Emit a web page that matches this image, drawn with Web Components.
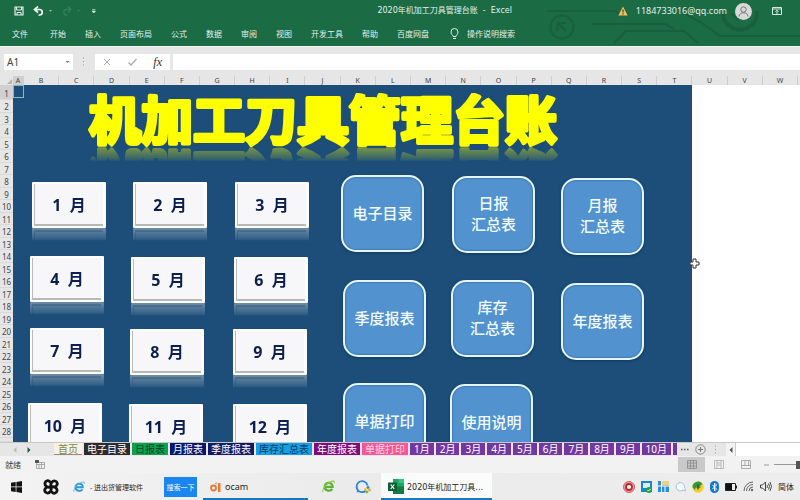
<!DOCTYPE html>
<html lang="zh-CN">
<head>
<meta charset="utf-8">
<title>2020年机加工刀具管理台账 - Excel</title>
<style>
    body {
        margin: 0;
        font-family: 'Noto Sans', 'Noto Sans CJK SC', sans-serif;
        font-size: 8px;
        color: #444;
    }
</style>
</head>
<body>
<excel-window></excel-window>

<script>
const base = `
    * { box-sizing: border-box; }
    button, input {
        font: inherit;
        color: inherit;
        background: none;
        border: none;
        padding: 0;
        margin: 0;
        min-width: 0;
    }
    button { cursor: pointer; white-space: nowrap; }
    svg { display: block; flex: none; }
`;

function define(name, html, setup) {
    const template = document.createElement('template');
    template.innerHTML = html;
    customElements.define(name, class extends HTMLElement {
        constructor() {
            super();
            this.attachShadow({ mode: 'open' });
            this.shadowRoot.appendChild(template.content.cloneNode(true));
        }
        connectedCallback() {
            if (setup) setup(this, this.shadowRoot);
        }
    });
}

// shapes are placed on the sheet by their x / y attributes
function place(host) {
    host.style.left = host.getAttribute('x') + 'px';
    host.style.top = host.getAttribute('y') + 'px';
}

define('month-card', `
    <style>
        ${base}
        :host { position: absolute; width: 74px; height: 46px; }
        button {
            display: block;
            width: 100%;
            height: 100%;
            padding: 2px 3px 2px 2px;
            background: #fff;
            border-radius: 1px;
            -webkit-box-reflect: below 0 linear-gradient(transparent 72%, rgba(255, 255, 255, .1) 76%, rgba(255, 255, 255, .36));
        }
        span {
            display: flex;
            align-items: center;
            justify-content: center;
            height: 100%;
            padding-top: 2px;
            background: #f7f7f9;
            border-left: 1px solid #bbb;
            border-bottom: 2px solid #b8b8b8;
            color: #0c1f50;
            font-size: 16px;
            font-weight: 700;
            line-height: 20px;
            white-space: pre;
        }
    </style>
    <button type="button"><span><slot></slot></span></button>
`, place);

define('nav-tile', `
    <style>
        ${base}
        :host { position: absolute; width: 83px; height: 77px; }
        button {
            width: 100%;
            height: 100%;
            padding-bottom: 3px;
            background: #5192cf;
            border: 2px solid #e4f6fb;
            border-radius: 15px;
            box-shadow: inset 0 0 2px #234f7c, 0 1px 3px #123a5e;
            color: #f2fbff;
            font-family: 'Noto Sans CJK SC', sans-serif;
            font-size: 15px;
            font-weight: 500;
            line-height: 21px;
            white-space: pre-line;
        }
    </style>
    <button type="button"><slot></slot></button>
`, place);

define('title-bar', `
    <style>
        ${base}
        :host {
            display: grid;
            grid-template-columns: 1fr auto 36%;
            align-items: center;
            height: 22px;
            color: #e4f0e9;
        }
        .tools, .account { display: flex; align-items: center; }
        .tools { gap: 9px; padding-left: 14px; }
        .account { justify-content: flex-end; gap: 8px; padding-right: 18px; }
        h1 {
            margin: 0;
            font: 400 8px/12px 'DejaVu Sans', 'Noto Sans CJK SC', sans-serif;
        }
        .mail { font-size: 9px; line-height: 12px; }
        .screen { margin-left: 12px; }
    </style>
    <div class="tools">
        <button type="button" aria-label="保存"><svg width="10" height="10" viewBox="0 0 10 10"><path d="M1 1h8v8H1z" fill="none" stroke="#e4f0e9" stroke-width="1.2"/><path d="M2.5 1v3h5V1M3 9V6.5h4V9" fill="none" stroke="#e4f0e9"/></svg></button>
        <button type="button" aria-label="撤消"><svg width="20" height="10" viewBox="0 0 20 10"><path d="M5 .5 1.5 3.500 5 6.500M2 3.500h4.500a2.600 2.600 0 0 1 0 5.500H5.500" fill="none" stroke="#f2f8f4" stroke-width="1.7"/><path d="M16 4h3l-1.500 2z" fill="#8dbda2"/></svg></button>
        <button type="button" aria-label="恢复"><svg width="20" height="10" viewBox="0 0 20 10"><path d="m6 .5 3 3-3 3M9 3.500H4.500a2.600 2.600 0 0 0 0 5.500h1" fill="none" stroke="#35805a" stroke-width="1.300"/><path d="M15 4h3l-1.500 2z" fill="#35805a"/></svg></button>
        <button type="button" aria-label="自定义"><svg width="6" height="8" viewBox="0 0 6 8"><path d="M1 2.500h3.500M1 4h3.500L2.750 6z" stroke="#dcebe2" stroke-width=".6" fill="#dcebe2"/></svg></button>
    </div>
    <h1>2020年机加工刀具管理台账 &nbsp;- &nbsp;Excel</h1>
    <div class="account">
        <svg width="10" height="10" viewBox="0 0 10 10"><path d="M5 .5 9.700 9.500H.3z" fill="#f3bd62"/><path d="M5 3.500v3M5 7.300v1.200" stroke="#5a3d10" stroke-width="1.200"/></svg>
        <span class="mail">1184733016@qq.com</span>
        <svg width="17" height="17" viewBox="0 0 17 17"><circle cx="8.500" cy="8.500" r="8.500" fill="#d8d9d8"/><circle cx="8.500" cy="6.500" r="2.700" fill="none" stroke="#777" stroke-width="1"/><path d="M4 13.500c0-5 9-5 9 0" fill="none" stroke="#777"/></svg>
        <svg class="screen" width="10" height="8" viewBox="0 0 10 8"><path d="M.5.5h9v7h-9zM.5 2h9M5 7V3.500M3.500 4.700 5 3.200l1.500 1.500" fill="none" stroke="#d9ebe0"/></svg>
    </div>
`);

define('ribbon-tabs', `
    <style>
        ${base}
        :host { display: block; height: 24px; color: #e4f0e9; }
        nav {
            display: flex;
            align-items: center;
            gap: 19px;
            height: 100%;
            padding-left: 12px;
            font-family: 'Noto Sans CJK SC', sans-serif;
            font-size: 8px;
            line-height: 12px;
        }
        .file { margin-right: 3px; }
        .tell { display: flex; align-items: center; gap: 8px; margin-left: 2px; }
    </style>
    <nav>
        <button type="button" class="file">文件</button>
        <button type="button">开始</button>
        <button type="button">插入</button>
        <button type="button">页面布局</button>
        <button type="button">公式</button>
        <button type="button">数据</button>
        <button type="button">审阅</button>
        <button type="button">视图</button>
        <button type="button">开发工具</button>
        <button type="button">帮助</button>
        <button type="button">百度网盘</button>
        <button type="button" class="tell">
            <svg width="9" height="12" viewBox="0 0 9 12"><path d="M3 8.500C3 7 1 6.500 1 4a3.500 3.500 0 0 1 7 0C8 6.500 6 7 6 8.500zM3 10.500h3" fill="none" stroke="#e4f0e9"/></svg>
            操作说明搜索
        </button>
    </nav>
`);

define('formula-bar', `
    <style>
        ${base}
        :host {
            display: flex;
            align-items: center;
            height: 30px;
            padding-left: 4px;
            background: #e6e6e6;
            border-top: 1px solid #f4f4f4;
        }
        .name {
            display: flex;
            align-items: center;
            justify-content: space-between;
            width: 69px;
            height: 16px;
            padding: 0 3px;
            background: #fff;
        }
        .name input { width: 40px; font-size: 10px; line-height: 14px; }
        .dots { margin: 0 10px 0 9px; }
        .keys {
            display: flex;
            align-items: center;
            justify-content: space-between;
            width: 75px;
            height: 16px;
            padding: 0 8px;
            background: #fff;
        }
        .fx { font: italic 400 12px/14px 'Liberation Serif', serif; color: #333; }
        .formula { flex: 1; height: 16px; margin-left: 3px; background: #fff; }
    </style>
    <div class="name">
        <input type="text" value="A1" aria-label="名称框">
        <svg width="5" height="4" viewBox="0 0 5 4"><path d="M.5 1h4l-2 2z" fill="#777"/></svg>
    </div>
    <svg class="dots" width="3" height="9" viewBox="0 0 3 9"><path d="M1 1h1M1 4.500h1M1 8h1" stroke="#999"/></svg>
    <div class="keys">
        <button type="button" aria-label="取消"><svg width="8" height="8" viewBox="0 0 8 8"><path d="m1 1 6 6M7 1 1 7" stroke="#aaa"/></svg></button>
        <button type="button" aria-label="输入"><svg width="9" height="8" viewBox="0 0 9 8"><path d="m.5 4.500 2.500 2.500L8.500 1" stroke="#aaa" stroke-width="1.300" fill="none"/></svg></button>
        <button type="button" class="fx">fx</button>
    </div>
    <input class="formula" type="text" aria-label="编辑栏">
`);

define('work-sheet', `
    <style>
        ${base}
        :host {
            --cols: 11px repeat(22, minmax(0, 1fr)) 2px;
            display: grid;
            grid-template: 9px minmax(0, 1fr) / 13px minmax(0, 1fr);
            flex: 1;
            min-height: 0;
            background: #e6e6e6;
            overflow: hidden;
        }
        .corner { display: flex; justify-content: flex-end; padding: 3px 1px 0 0; }
        .cols { display: grid; grid-template-columns: var(--cols); }
        .cols span {
            border-right: 1px solid #cfcfcf;
            font-size: 7px;
            line-height: 9px;
            text-align: center;
        }
        .cols .on, .rows .on { background: #d0d0d0; }
        .rows {
            display: grid;
            grid-template-rows: 15px repeat(27, minmax(0, 1fr)) 4px;
            min-height: 0;
        }
        .rows span {
            padding-top: 1px;
            border-bottom: 1px solid #d9d9d9;
            font-size: 8px;
            line-height: 11px;
            text-align: center;
            overflow: hidden;
        }
        .rows .on { padding-top: 3px; }
        .canvas {
            display: grid;
            grid-template-columns: var(--cols);
            position: relative;
            background: #fff;
            overflow: hidden;
        }
        .fill { grid-area: 1 / 1 / 2 / 21; background: #1c4e79; }
        .cell { grid-area: 1 / 1; height: 13px; border: 1px solid #7fc0b0; }
    </style>
    <div class="corner"><svg width="5" height="5" viewBox="0 0 5 5"><path d="M5 0v5H0z" fill="#b5b5b5"/></svg></div>
    <div class="cols"></div>
    <div class="rows"></div>
    <div class="canvas">
        <div class="fill"></div>
        <div class="cell"></div>
        <slot></slot>
    </div>
`, (host, root) => {
    const cols = [...'ABCDEFGHIJKLMNOPQRSTUVW'];
    const rows = Array.from({ length: 29 }, (_, i) => i + 1);
    const cells = list => list.map((t, i) => `<span${i ? '' : ' class="on"'}>${t}</span>`).join('');
    root.querySelector('.cols').innerHTML = cells(cols);
    root.querySelector('.rows').innerHTML = cells(rows);
});

define('word-art', `
    <style>
        ${base}
        :host { position: absolute; }
        svg { -webkit-box-reflect: below -12px linear-gradient(transparent 66%, rgba(255, 255, 255, .12) 70%, rgba(255, 255, 255, .42) 90%); }
        text {
            font-family: 'Liberation Sans', 'Noto Sans CJK SC', sans-serif;
            font-size: 52px;
            font-weight: 700;
            fill: #ff0;
            stroke: #ff0;
            stroke-width: 4px;
            stroke-linejoin: round;
        }
    </style>
    <svg width="472" height="60"><text x="1" y="47"></text></svg>
`, (host, root) => {
    place(host);
    root.querySelector('text').textContent = host.textContent;
});

define('mouse-cross', `
    <style>
        ${base}
        :host { position: absolute; }
    </style>
    <svg width="11" height="11" viewBox="0 0 11 11"><path d="M4 1h3v3h3v3H7v3H4V7H1V4h3z" fill="#fff" stroke="#333"/></svg>
`, place);

define('sheet-tabs', `
    <style>
        ${base}
        :host {
            display: flex;
            height: 14px;
            background: #e6e6e6;
            border-top: 1px solid #c8c8c8;
        }
        .arrows { display: flex; align-items: center; gap: 10px; width: 54px; padding-left: 13px; }
        .tabs { display: flex; gap: 2px; background: #efe6f2; }
        .tabs button {
            height: 12px;
            padding: 0 3px;
            background: var(--c);
            color: var(--t, #fff);
            font-size: 10px;
            line-height: 12px;
            overflow: hidden;
        }
        .tabs .month { padding: 0 4px; background: #7338a0; }
        .tabs .home { padding: 0 4px; border-bottom: 1px solid #a08b70; }
        .tabs .cut { width: 4px; padding: 0; background: #7338a0; }
        .more { display: flex; align-items: center; gap: 6px; padding: 0 9px 0 4px; }
        .scroll { display: flex; flex: 1; align-items: center; gap: 3px; background: #fff; }
        .scroll button { height: 13px; width: 10px; padding-left: 3px; background: #f3f3f3; border-right: 1px solid #ccc; }
    </style>
    <div class="arrows">
        <svg width="4" height="6" viewBox="0 0 4 6"><path d="M3.500 0v6L.5 3z" fill="#bbb"/></svg>
        <svg width="4" height="6" viewBox="0 0 4 6"><path d="M.5 0v6l3-3z" fill="#1d5c3d"/></svg>
    </div>
    <div class="tabs">
        <button type="button" class="home" style="--c:#fbf1e2;--t:#6f8a5c">首页</button>
        <button type="button" style="--c:#2f2a2b">电子目录</button>
        <button type="button" style="--c:#0aa24f;--t:#0c4524">日报表</button>
        <button type="button" style="--c:#06186a">月报表</button>
        <button type="button" style="--c:#0e1c66">季度报表</button>
        <button type="button" style="--c:#14a0e6;--t:#0b3a5c">库存汇总表</button>
        <button type="button" style="--c:#7e0c7c">年度报表</button>
        <button type="button" style="--c:#fb5596;--t:#ffd9e6">单据打印</button>
        <button type="button" class="month">1月</button>
        <button type="button" class="month">2月</button>
        <button type="button" class="month">3月</button>
        <button type="button" class="month">4月</button>
        <button type="button" class="month">5月</button>
        <button type="button" class="month">6月</button>
        <button type="button" class="month">7月</button>
        <button type="button" class="month">8月</button>
        <button type="button" class="month">9月</button>
        <button type="button" class="month">10月</button>
        <button type="button" class="cut" aria-label="下一张"></button>
    </div>
    <div class="more">
        <svg width="8" height="3" viewBox="0 0 8 3"><path d="M0 1.500h1.500M3 1.500h1.500M6 1.500h1.500" stroke="#555" stroke-width="1.500"/></svg>
        <button type="button" aria-label="新工作表"><svg width="11" height="11" viewBox="0 0 11 11"><circle cx="5.500" cy="5.500" r="4.700" fill="none" stroke="#888"/><path d="M5.500 3v5M3 5.500h5" stroke="#777"/></svg></button>
        <svg width="5" height="9" viewBox="0 0 5 9"><path d="M3 1h1M3 4.500h1M3 8h1" stroke="#999"/></svg>
    </div>
    <div class="scroll"><button type="button" aria-label="向左滚动"><svg width="4" height="6" viewBox="0 0 4 6"><path d="M3.500 0v6L.5 3z" fill="#555"/></svg></button></div>
`);

define('status-bar', `
    <style>
        ${base}
        :host {
            display: flex;
            align-items: center;
            justify-content: space-between;
            height: 17px;
            padding-left: 5px;
            background: #f2f2f2;
            font-size: 8px;
            line-height: 12px;
        }
        .state, .views { display: flex; align-items: center; }
        .state { gap: 14px; }
        .views button { display: grid; place-items: center; width: 27px; height: 15px; }
        .views .on { background: #c9c9c9; }
        .minus { margin-left: 5px; }
        input {
            appearance: none;
            width: 26px;
            height: 9px;
            margin-left: 5px;
            background: linear-gradient(#999, #999) center / 100% 1px no-repeat;
        }
        input::-webkit-slider-thumb { appearance: none; width: 4px; height: 8px; background: #555; }
    </style>
    <div class="state">
        <span>就绪</span>
        <svg width="10" height="9" viewBox="0 0 10 9"><path d="M1.500 2.500h8v6h-8zM1.500 4.500h8M4 4.500v4M6.500 2.500v6" fill="none" stroke="#999" stroke-width=".8"/><path d="M0 0h4v3H0z" fill="#555"/></svg>
    </div>
    <div class="views">
        <button type="button" class="on" aria-label="普通"><svg width="10" height="9" viewBox="0 0 10 9"><path d="M.5.5h9v8h-9zM.5 3h9M.5 6h9M3.500.5v8M6.500.5v8" fill="none" stroke="#888" stroke-width=".8"/></svg></button>
        <button type="button" aria-label="页面布局"><svg width="10" height="9" viewBox="0 0 10 9"><path d="M.5.5h9v8h-9zM3 .5v8M7 .5v8M3.500 3h3M3.500 5h3" fill="none" stroke="#aaa" stroke-width=".8"/></svg></button>
        <button type="button" aria-label="分页预览"><svg width="10" height="9" viewBox="0 0 10 9"><path d="M.5.5h9v8h-9zM.5 5.500h9M4 .5v5M7.500.5v5" fill="none" stroke="#999" stroke-width=".8"/></svg></button>
        <svg class="minus" width="5" height="2" viewBox="0 0 5 2"><path d="M0 1h5" stroke="#999"/></svg>
        <input type="range" value="100" aria-label="缩放">
    </div>
`);

define('task-bar', `
    <style>
        ${base}
        :host {
            display: flex;
            height: 27px;
            background: linear-gradient(90deg, #f3f3f3, #ebebeb 45%, #ededed);
            color: #222;
            font-size: 8px;
        }
        .start, .ie, .app, .pins, .tray { display: flex; align-items: center; }
        .start { gap: 21px; padding: 0 14px 0 11px; }
        .ie { gap: 5px; width: 91px; font: 7px/10px 'Noto Sans CJK SC', sans-serif; }
        .search {
            align-self: center;
            width: 33px;
            height: 20px;
            background: #1b86f0;
            color: #fff;
            font: 7px/10px 'Noto Sans CJK SC', sans-serif;
        }
        .app { border-bottom: 2px solid #1878bd; padding-top: 2px; }
        .ocam { gap: 4px; width: 105px; margin-left: 6px; padding-left: 7px; font-size: 9px; }
        .pins { gap: 20px; padding: 0 10px 0 14px; }
        .excel { gap: 3px; width: 111px; padding-left: 7px; background: #fbfbfb; font-family: 'DejaVu Sans', 'Noto Sans CJK SC', sans-serif; }
        .tray { gap: 6px; margin-left: auto; padding-right: 6px; }
    </style>
    <div class="start">
        <button type="button" aria-label="开始"><svg width="11" height="12" viewBox="0 0 11 12"><path d="M0 1.700 4.700 1v4.600H0zM5.400.9 11 0v5.600H5.400zM0 6.300h4.700V11L0 10.300zM5.400 6.300H11V12l-5.600-.9z" fill="#111"/></svg></button>
        <svg width="16" height="16" viewBox="0 0 16 16" fill="none" stroke="#111" stroke-width="2.800" stroke-linecap="round"><path d="M8 8C4 9 1.500 6.500 2 4s3.500-3 5-1.200"/><path d="M8 8C7 4 9.500 1.500 12 2s3 3.500 1.200 5"/><path d="M8 8c4-1 6.500 1.500 6 4s-3.500 3-5 1.200"/><path d="M8 8c1 4-1.500 6.500-4 6s-3-3.500-1.200-5"/></svg>
    </div>
    <div class="ie">
        <svg width="12" height="12" viewBox="0 0 12 12"><path d="M2.500 6.300h7.300C9.800 1.500 2.500 1.500 2.500 6.300c0 4.200 5.500 4.500 7 1.900" fill="none" stroke="#3096e0" stroke-width="1.900"/><path d="M1 11C-.5 8 6 1 10.500 1c1 0 1 1 .5 2" fill="none" stroke="#5bb3ee" stroke-width=".9"/></svg>
        <span>- 进出货管理软件</span>
    </div>
    <button type="button" class="search">搜索一下</button>
    <div class="app ocam">
        <svg width="11" height="10" viewBox="0 0 11 10"><circle cx="3.500" cy="6" r="2.500" fill="none" stroke="#e9763a" stroke-width="1.800"/><path d="M5 1.500 6.500 0v3zM8 1h2.500v9H8z" fill="#ec7b37"/></svg>
        <span>ocam</span>
    </div>
    <div class="pins">
        <svg width="13" height="13" viewBox="0 0 12 12"><path d="M2.500 6.300h7.300C9.800 1.500 2.500 1.500 2.500 6.300c0 4.200 5.500 4.500 7 1.900" fill="none" stroke="#5fb233" stroke-width="2.100"/><path d="M1 11C-.5 8 6 1 10.500 1c1 0 1 1 .5 2" fill="none" stroke="#8acb4d"/></svg>
        <svg width="16" height="15" viewBox="0 0 16 15"><path d="M11 11.500A5.500 5.500 0 1 1 12.500 6.500" fill="none" stroke="#2f83dc" stroke-width="1.800"/><path d="m2.500 10.500-1 3 3-1z" fill="#2f83dc"/><circle cx="13" cy="8.500" r="1.400" fill="#2f83dc"/><circle cx="14.500" cy="11" r="1.400" fill="#f5a623"/><circle cx="12" cy="13" r="1.400" fill="#7dbb42"/><circle cx="10.500" cy="10.500" r="1.400" fill="#f5c342"/></svg>
    </div>
    <div class="app excel">
        <svg width="16" height="15" viewBox="0 0 16 15"><path d="M5 0h11v15H5z" fill="#21a366"/><path d="M5 7.500h11V15H5z" fill="#107c41"/><path d="M10.500 0H16v4h-5.500z" fill="#33c481"/><path d="M0 3.500h9v8.500H0z" fill="#0d5f33"/><path d="m2.700 5.500 3.600 4.500M6.300 5.500 2.700 10" stroke="#fff" stroke-width="1.200"/></svg>
        <span>2020年机加工刀具...</span>
    </div>
    <div class="tray">
        <svg width="12" height="12" viewBox="0 0 12 12"><circle cx="6" cy="6" r="5.500" fill="#e9a09a" stroke="#c9635e"/><circle cx="6" cy="6" r="3" fill="#fff" stroke="#c1272d" stroke-width="1.800"/></svg>
        <svg width="11" height="12" viewBox="0 0 11 12"><path d="M0 0h11v11H0z" fill="#1b85d1"/><path d="M2 2h7v5H2z" fill="#d9effc"/><circle cx="8" cy="9" r="3" fill="#20a04b"/><path d="m6.500 9 1 1 2-2" stroke="#fff" fill="none"/></svg>
        <svg width="11" height="11" viewBox="0 0 11 11"><path d="M0 0h11v11H0z" fill="#2b8fd6"/><path d="M3.500 0v11M7 5v6M0 5h11" stroke="#fff"/><path d="M4 0h7v4.500H4z" fill="#e8d38c"/></svg>
        <svg width="11" height="11" viewBox="0 0 11 11"><path d="M8 9A4.200 4.200 0 1 1 9.500 5.500L10.500 10 7 9" fill="#f7fbfd" stroke="#9cc5dc"/></svg>
        <svg width="12" height="12" viewBox="0 0 12 12"><circle cx="6" cy="6" r="5.700" fill="#f0cf2a"/><path d="M.5 6a5.500 5.500 0 0 1 10-3L8 5H4L3 9z" fill="#2e9b3f"/><path d="M6 3.500v5M3.500 6h5" stroke="#14532d" stroke-width="1.200"/></svg>
        <svg width="9" height="12" viewBox="0 0 9 12"><rect width="9" height="12" rx="4.500" fill="#1478cc"/><path d="m2.500 4 4 4-2 2V2l2 2-4 4" fill="none" stroke="#fff"/></svg>
        <svg width="12" height="8" viewBox="0 0 12 8"><path d="M.5.5h10v7H.5zM11.500 2.500v3" fill="none" stroke="#222"/><path d="M1 1h6v6H1z" fill="#111"/></svg>
        <svg width="11" height="11" viewBox="0 0 11 11" fill="none" stroke="#555" stroke-width=".9"><path d="M1 10A9 9 0 0 1 10 1M3.500 10A6.500 6.500 0 0 1 10 3.500M6 10a4 4 0 0 1 4-4"/><circle cx="9" cy="9" r=".8" fill="#333"/></svg>
        <svg width="12" height="11" viewBox="0 0 12 11" fill="none" stroke="#333" stroke-width=".9"><path d="M.5 4h2L5.500 1v9l-3-3h-2zM7 4q1 1.500 0 3M8.500 2.500q2 3 0 6M10 1q3 4.500 0 9"/></svg>
        <span>简体</span>
    </div>
`);

define('excel-window', `
    <style>
        ${base}
        :host { display: flex; flex-direction: column; height: 100vh; overflow: hidden; }
        header { position: relative; background: #1b6b45; }
        .circuit { position: absolute; right: 0; top: 0; }
        title-bar, ribbon-tabs { position: relative; }
    </style>
    <header>
        <svg class="circuit" width="270" height="46" viewBox="0 0 270 46" fill="none" stroke="#195f3d" stroke-width="2"><circle cx="32" cy="27" r="11.500"/><path d="m27 31 1-8h8M28 23l8 8M17 11h68l8 5M62 24h73l9 5M84 43l12-12h58l14 12M150 11l22 12 18 13h80"/><path d="M193 14a17 17 0 1 0 34-3" stroke-width="4"/><path d="M202 13a9 9 0 0 0 17 0"/></svg>
        <title-bar></title-bar>
        <ribbon-tabs></ribbon-tabs>
    </header>
    <formula-bar></formula-bar>
    <work-sheet>
        <word-art x="75" y="8">机加工刀具管理台账</word-art>
        <month-card x="19" y="97">1  月</month-card>
        <month-card x="120" y="97">2  月</month-card>
        <month-card x="222" y="97">3  月</month-card>
        <month-card x="17" y="171">4  月</month-card>
        <month-card x="118" y="172">5  月</month-card>
        <month-card x="221" y="172">6  月</month-card>
        <month-card x="17" y="243">7  月</month-card>
        <month-card x="117" y="244">8  月</month-card>
        <month-card x="220" y="244">9  月</month-card>
        <month-card x="15" y="318">10  月</month-card>
        <month-card x="116" y="319">11  月</month-card>
        <month-card x="220" y="319">12  月</month-card>
        <nav-tile x="328" y="90">电子目录</nav-tile>
        <nav-tile x="439" y="91">日报
汇总表</nav-tile>
        <nav-tile x="548" y="93">月报
汇总表</nav-tile>
        <nav-tile x="330" y="195">季度报表</nav-tile>
        <nav-tile x="438" y="195">库存
汇总表</nav-tile>
        <nav-tile x="548" y="198">年度报表</nav-tile>
        <nav-tile x="330" y="298">单据打印</nav-tile>
        <nav-tile x="437" y="299">使用说明</nav-tile>
        <mouse-cross x="676" y="173"></mouse-cross>
    </work-sheet>
    <sheet-tabs></sheet-tabs>
    <status-bar></status-bar>
    <task-bar></task-bar>
`);
</script>
</body>
</html>
